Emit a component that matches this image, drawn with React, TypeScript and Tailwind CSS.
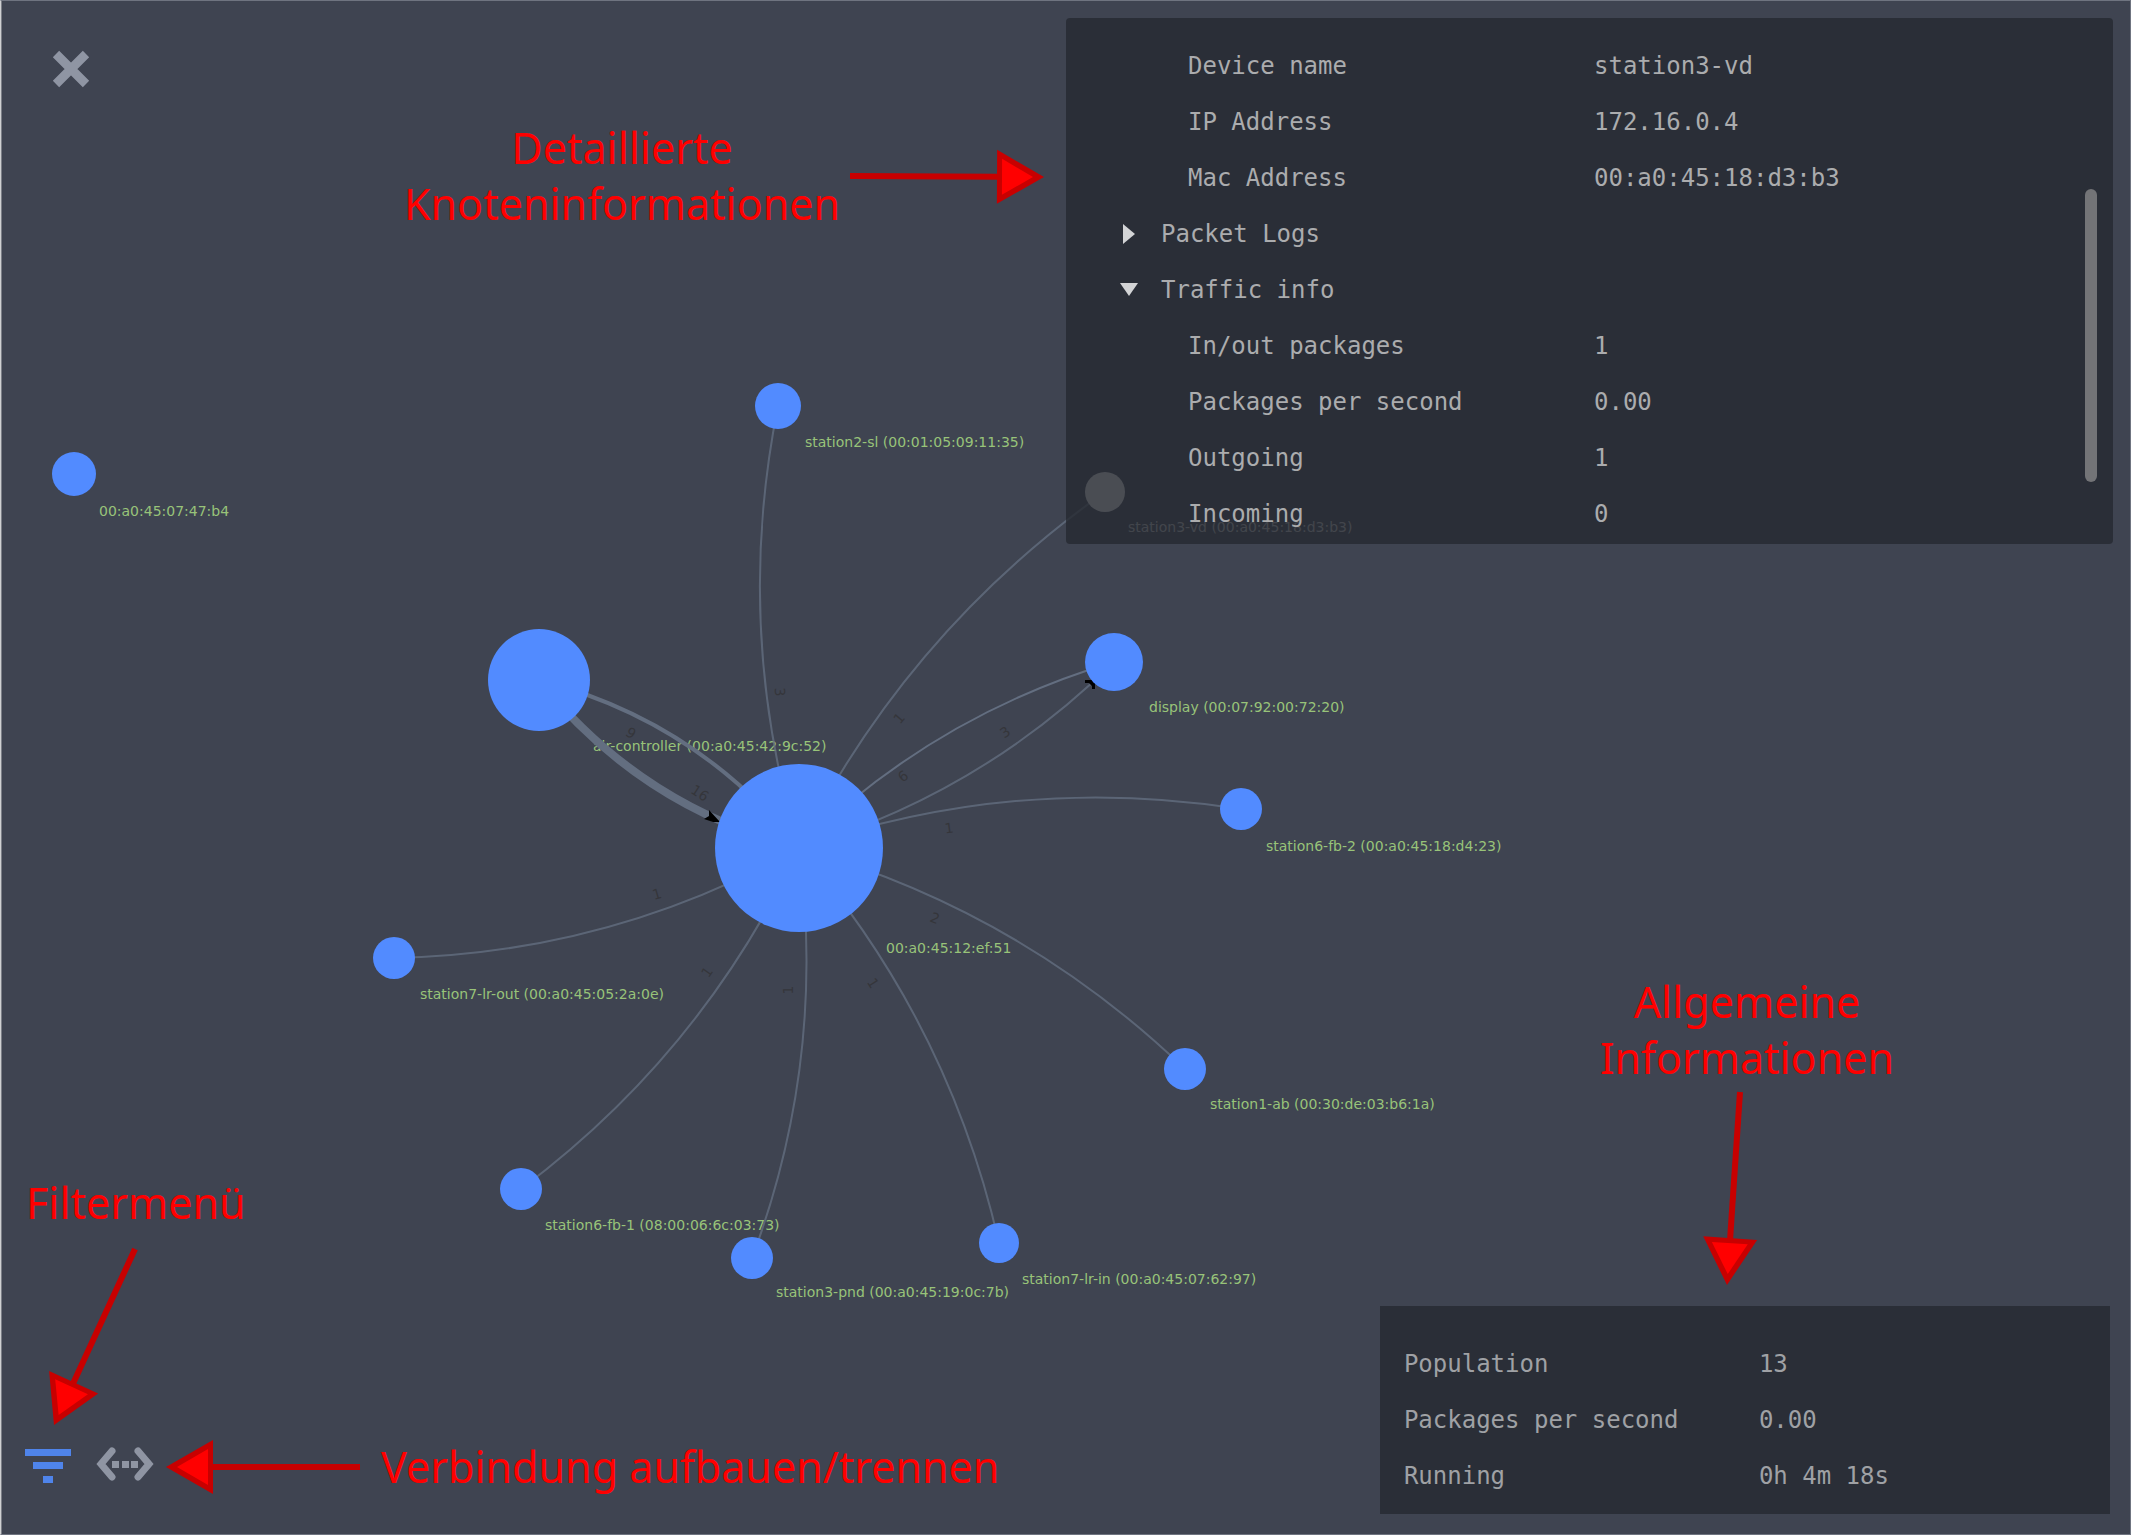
import React from "react";

type Point = { x: number; y: number };

type GraphNode = Point & {
  id: string;
  r: number;
  label: string;
  labelX: number;
  labelY: number;
  selected?: boolean;
};

const nodes: GraphNode[] = [
  { id: "hub", x: 799, y: 848, r: 84, label: "00:a0:45:12:ef:51", labelX: 886, labelY: 953 },
  { id: "air", x: 539, y: 680, r: 51, label: "air-controller (00:a0:45:42:9c:52)", labelX: 593, labelY: 751 },
  { id: "station2", x: 778, y: 406, r: 23, label: "station2-sl (00:01:05:09:11:35)", labelX: 805, labelY: 447 },
  { id: "vd", x: 1105, y: 492, r: 20, label: "station3-vd (00:a0:45:18:d3:b3)", labelX: 1128, labelY: 532, selected: true },
  { id: "display", x: 1114, y: 662, r: 29, label: "display (00:07:92:00:72:20)", labelX: 1149, labelY: 712 },
  { id: "fb2", x: 1241, y: 809, r: 21, label: "station6-fb-2 (00:a0:45:18:d4:23)", labelX: 1266, labelY: 851 },
  { id: "lone", x: 74, y: 474, r: 22, label: "00:a0:45:07:47:b4", labelX: 99, labelY: 516 },
  { id: "lrout", x: 394, y: 958, r: 21, label: "station7-lr-out (00:a0:45:05:2a:0e)", labelX: 420, labelY: 999 },
  { id: "fb1", x: 521, y: 1189, r: 21, label: "station6-fb-1 (08:00:06:6c:03:73)", labelX: 545, labelY: 1230 },
  { id: "pnd", x: 752, y: 1258, r: 21, label: "station3-pnd (00:a0:45:19:0c:7b)", labelX: 776, labelY: 1297 },
  { id: "ab", x: 1185, y: 1069, r: 21, label: "station1-ab (00:30:de:03:b6:1a)", labelX: 1210, labelY: 1109 },
  { id: "lrin", x: 999, y: 1243, r: 20, label: "station7-lr-in (00:a0:45:07:62:97)", labelX: 1022, labelY: 1284 },
];

type Edge = {
  from: string;
  to: string;
  width: number;
  opacity?: number;
  bend?: number;
  count: number;
  at: Point;
  angle: number;
};

const edges: Edge[] = [
  { from: "hub", to: "station2", width: 2, count: 3, at: { x: 780, y: 692 }, angle: 87 },
  { from: "hub", to: "vd", width: 2, count: 1, at: { x: 899, y: 718 }, angle: -50 },
  { from: "hub", to: "display", width: 2, opacity: 1, count: 6, at: { x: 903, y: 776 }, angle: -35 },
  { from: "display", to: "hub", width: 2, count: 3, at: { x: 1005, y: 732 }, angle: -35 },
  { from: "hub", to: "fb2", width: 2, count: 1, at: { x: 949, y: 828 }, angle: -7 },
  { from: "hub", to: "ab", width: 2, count: 2, at: { x: 935, y: 918 }, angle: 22 },
  { from: "hub", to: "lrin", width: 2, count: 1, at: { x: 873, y: 983 }, angle: 57 },
  { from: "hub", to: "pnd", width: 2, count: 1, at: { x: 788, y: 990 }, angle: -90 },
  { from: "hub", to: "fb1", width: 2, count: 1, at: { x: 707, y: 972 }, angle: -55 },
  { from: "hub", to: "lrout", width: 2, count: 1, at: { x: 657, y: 894 }, angle: -16 },
  { from: "hub", to: "air", width: 8, opacity: 1, bend: 6, count: 16, at: { x: 700, y: 793 }, angle: 33 },
  { from: "air", to: "hub", width: 4, opacity: 1, bend: 6, count: 9, at: { x: 631, y: 733 }, angle: 33 },
];

const byId = Object.fromEntries(nodes.map((n) => [n.id, n]));

function edgePath(edge: Edge) {
  const a = byId[edge.from];
  const b = byId[edge.to];
  const bend = edge.bend ?? 8;
  const cx = (a.x + b.x) / 2 + (b.y - a.y) / bend;
  const cy = (a.y + b.y) / 2 + (a.x - b.x) / bend;
  return `M${a.x} ${a.y}Q${cx} ${cy} ${b.x} ${b.y}`;
}

function Arrow({ tail, tip }: { tail: Point; tip: Point }) {
  const dx = tip.x - tail.x;
  const dy = tip.y - tail.y;
  const length = Math.hypot(dx, dy);
  const angle = (Math.atan2(dy, dx) * 180) / Math.PI;
  return (
    <g transform={`translate(${tip.x} ${tip.y}) rotate(${angle})`}>
      <path d={`M${-length} 0H-44`} stroke="#c80000" strokeWidth={6} />
      <path d="M0 0L-47 -27V27Z" fill="#c80000" />
      <path d="M-11 0L-42 -18V18Z" fill="#ff0000" />
    </g>
  );
}

function Graph() {
  return (
    <svg
      className="absolute inset-0 h-full w-full"
      viewBox="0 0 2131 1535"
      preserveAspectRatio="xMidYMid slice"
      role="img"
      aria-label="Network graph"
    >
      <g className="font-['DejaVu_Sans',sans-serif] text-[14px]">
        {nodes.map((n) => (
          <text key={n.id} x={n.labelX} y={n.labelY} fill={n.selected ? "#b4b5b7" : "#98c379"}>
            {n.label}
          </text>
        ))}
      </g>
      <g fill="none" stroke="#636e80">
        {edges.map((e) => (
          <path
            key={`${e.from}-${e.to}`}
            d={edgePath(e)}
            strokeWidth={e.width}
            strokeOpacity={e.opacity ?? 0.8}
          />
        ))}
      </g>
      <g className="font-['DejaVu_Sans',sans-serif] text-[14px]" fill="#35363b" textAnchor="middle">
        {edges.map((e) => (
          <text
            key={`${e.from}-${e.to}`}
            transform={`translate(${e.at.x} ${e.at.y}) rotate(${e.angle})`}
            y={5}
          >
            {e.count}
          </text>
        ))}
      </g>
      <path d="M720 822L709 810V816L704 819L713 822Z" fill="#000" />
      <path d="M1085 680h7l3 3v6h-3v-3l-3-3h-4z" fill="#000" />
      {nodes.map((n) => (
        <circle key={n.id} cx={n.x} cy={n.y} r={n.r} fill={n.selected ? "#dadbdd" : "#528bff"} />
      ))}
    </svg>
  );
}

function Annotations() {
  return (
    <svg
      className="pointer-events-none absolute inset-0 h-full w-full"
      viewBox="0 0 2131 1535"
      preserveAspectRatio="xMidYMid slice"
    >
      <g className="font-['Noto_Sans','DejaVu_Sans',sans-serif] text-[43px]" fill="#ff0000">
        <text x={622} y={164} textAnchor="middle">Detaillierte</text>
        <text x={622} y={220} textAnchor="middle">Knoteninformationen</text>
        <text x={1747} y={1018} textAnchor="middle">Allgemeine</text>
        <text x={1747} y={1074} textAnchor="middle">Informationen</text>
        <text x={26} y={1219}>Filtermenü</text>
        <text x={381} y={1483}>Verbindung aufbauen/trennen</text>
      </g>
      <Arrow tail={{ x: 850, y: 176 }} tip={{ x: 1044, y: 177 }} />
      <Arrow tail={{ x: 1740, y: 1092 }} tip={{ x: 1727, y: 1285 }} />
      <Arrow tail={{ x: 135, y: 1249 }} tip={{ x: 54, y: 1425 }} />
      <Arrow tail={{ x: 360, y: 1467 }} tip={{ x: 166, y: 1467 }} />
    </svg>
  );
}

type DetailRow =
  | { kind: "field"; label: string; value: string }
  | { kind: "section"; label: string; open: boolean };

const details: DetailRow[] = [
  { kind: "field", label: "Device name", value: "station3-vd" },
  { kind: "field", label: "IP Address", value: "172.16.0.4" },
  { kind: "field", label: "Mac Address", value: "00:a0:45:18:d3:b3" },
  { kind: "section", label: "Packet Logs", open: false },
  { kind: "section", label: "Traffic info", open: true },
  { kind: "field", label: "In/out packages", value: "1" },
  { kind: "field", label: "Packages per second", value: "0.00" },
  { kind: "field", label: "Outgoing", value: "1" },
  { kind: "field", label: "Incoming", value: "0" },
];

function Disclosure({ open }: { open: boolean }) {
  return (
    <svg className="h-5 w-5 shrink-0" viewBox="0 0 20 20" fill="#d3d4d6" aria-hidden="true">
      <path d={open ? "M1 3H19L10 16Z" : "M4 0L16 10L4 20Z"} />
    </svg>
  );
}

function DetailsPanel() {
  return (
    <section
      aria-label="Node details"
      className="relative w-1/2 rounded bg-[#252931]/80 pt-5 pb-[2px] text-[#abacae]"
    >
      <table className="w-full table-fixed border-collapse text-left">
        <tbody>
          {details.map((row) =>
            row.kind === "field" ? (
              <tr key={row.label} className="h-14">
                <th scope="row" className="w-[528px] p-0 pl-[122px] font-normal">
                  {row.label}
                </th>
                <td className="p-0">{row.value}</td>
              </tr>
            ) : (
              <tr key={row.label} className="h-14">
                <th scope="row" colSpan={2} className="p-0 pl-[53px] font-normal">
                  <button type="button" aria-expanded={row.open} className="flex items-center gap-[22px]">
                    <Disclosure open={row.open} />
                    {row.label}
                  </button>
                </th>
              </tr>
            ),
          )}
        </tbody>
      </table>
      <div className="absolute top-[171px] right-4 h-[293px] w-3 rounded-full bg-[#737477]" />
    </section>
  );
}

const stats = [
  ["Population", "13"],
  ["Packages per second", "0.00"],
  ["Running", "0h 4m 18s"],
];

function StatsPanel() {
  return (
    <section aria-label="General information" className="w-[35%] bg-[#2a2e37] pt-[30px] pb-[10px] text-[#9fa1a5]">
      <table className="w-full table-fixed border-collapse text-left">
        <tbody>
          {stats.map(([label, value]) => (
            <tr key={label} className="h-14">
              <th scope="row" className="w-[379px] p-0 pl-6 font-normal">
                {label}
              </th>
              <td className="p-0">{value}</td>
            </tr>
          ))}
        </tbody>
      </table>
    </section>
  );
}

export default function App() {
  return (
    <main className="relative min-h-screen overflow-hidden bg-[#3f4451] font-['DejaVu_Sans_Mono',monospace] text-[24px] leading-8">
      <Graph />
      <div className="relative flex min-h-screen flex-col justify-between">
        <header className="flex items-start justify-between pt-[18px] pr-[18px] pl-[19px]">
          <button type="button" aria-label="Close" className="mt-[31px] ml-[32px]">
            <svg className="h-10 w-10" viewBox="0 0 40 40" stroke="#8f95a3" strokeWidth={9}>
              <path d="M5 5L35 35M35 5L5 35" />
            </svg>
          </button>
          <DetailsPanel />
        </header>
        <footer className="flex items-end justify-between pr-[21px] pb-[21px] pl-[24px]">
          <div className="flex items-center gap-6 pb-[31px]">
            <button type="button" aria-label="Filter menu">
              <svg className="h-9 w-12" viewBox="0 0 48 36" fill="#4f84ea">
                <path d="M1 2H47V9H1ZM9 15H39V22H9ZM19 29H29V36H19Z" />
              </svg>
            </button>
            <button type="button" aria-label="Connect or disconnect">
              <svg className="h-9 w-[58px]" viewBox="0 0 58 36" fill="#8f95a3">
                <path
                  d="M16 4L5 17L16 30M42 4L53 17L42 30"
                  fill="none"
                  stroke="#8f95a3"
                  strokeWidth={7}
                  strokeLinecap="round"
                />
                <path d="M16 14H23V21H16ZM26 14H33V21H26ZM35 14H42V21H35Z" />
              </svg>
            </button>
          </div>
          <StatsPanel />
        </footer>
      </div>
      <Annotations />
      <div className="pointer-events-none absolute inset-0 border border-[#6f7480] border-l-[#cfd0d2] shadow-[inset_1px_0_0_#7b7e86]" />
    </main>
  );
}
